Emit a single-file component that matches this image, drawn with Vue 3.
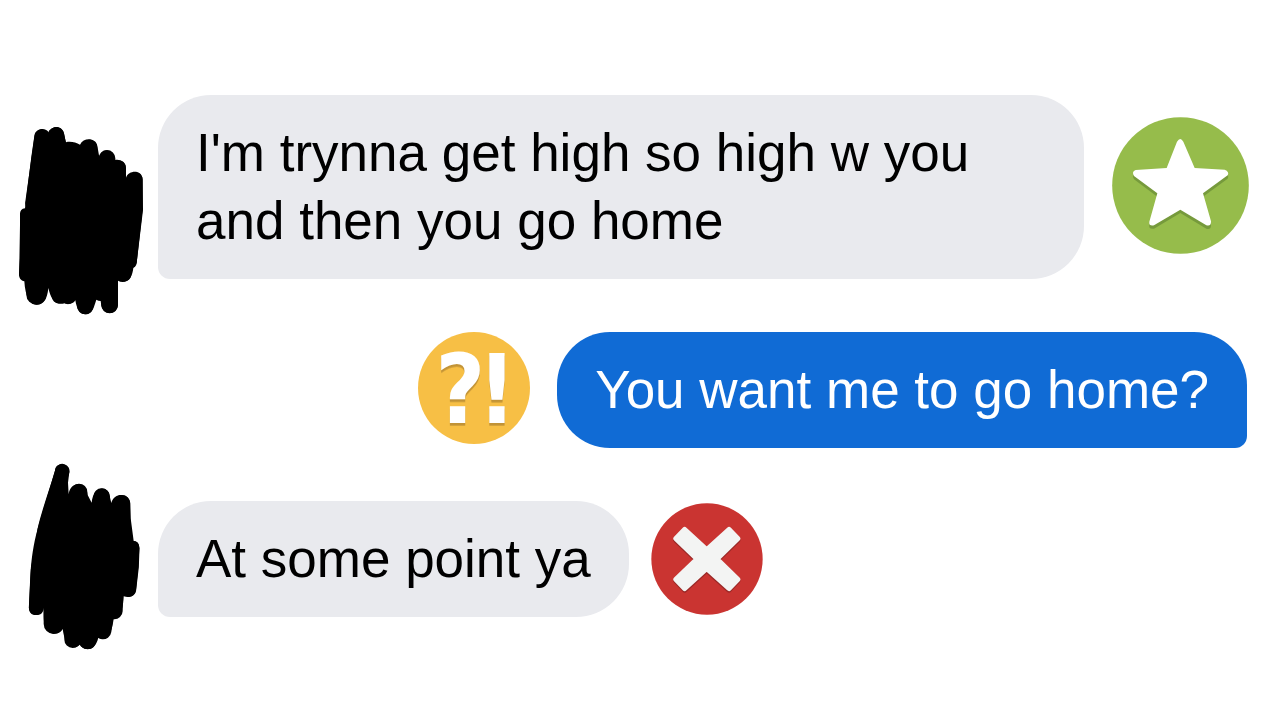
<script setup>
const messages = [
  { id: 1, side: 'incoming', size: 'wide', text: "I'm trynna get high so high w you and then you go home", badge: 'best' },
  { id: 2, side: 'outgoing', size: 'fit', text: 'You want me to go home?', badge: 'inaccuracy' },
  { id: 3, side: 'incoming', size: 'fit', text: 'At some point ya', badge: 'miss' }
]
</script>

<template>
  <main class="chat">
    <div v-for="m in messages" :key="m.id" class="row" :class="[m.side, m.size]">
      <svg v-if="m.id === 1" class="avatar tall" viewBox="0 -45 474 552" aria-hidden="true">
        <path d="M103 78C106 52 140 52 146 68C156 44 188 46 192 72L198 97C212 93 228 98 240 104C250 82 288 82 292 108L298 142C302 114 342 112 345 150C360 147 378 155 378 175L378 203C386 180 426 178 428 208L429 300L411 450C411 462 408 470 400 474C398 495 388 516 368 516Q360 516 354 512L354 585C350 616 312 616 304 588L302 573Q295 573 289 569C280 600 272 613 256 613C238 613 230 595 226 571C220 582 205 585 194 580C165 588 152 565 145 534C142 570 128 585 110 584C88 584 76 560 73 514C62 512 56 502 57 490L61 430L60 312C60 302 65 296 75 295L94 140Z" />
        <path class="pen" d="M125 80L97 280M210 119V300M356 173V300M406 208L406 300L389 453M373 493L380 300M82 317L79 490M177 559V400M204 561V400" />
        <path class="pen broad" d="M168 76L190 200M267 114L260 300M321 145V300M329 585V400M256 588V400" />
        <path class="pen thick" d="M109 554V480" />
      </svg>
      <svg v-if="m.id === 3" class="avatar short" viewBox="0 153 474 348" aria-hidden="true">
        <path d="M165 62C166 36 206 36 208 66L204 98L206 133C210 92 260 92 263 135L275 158C280 104 326 106 329 138L334 159C342 126 388 128 390 160L392 205L401 273Q418 273 418 295L415 350L408 420C404 440 388 444 371 439C370 465 366 500 341 507C336 540 328 568 308 567Q300 567 295 563C288 590 276 598 262 597Q246 596 239 584C226 598 208 593 200 580Q192 565 188 537C180 555 150 558 138 535C130 520 131 500 131 467C132 490 122 495 108 495C92 495 86 485 87 470C92 390 88 330 112 240C125 180 145 130 165 62Z" />
        <path class="pen" d="M187 63L134 240L114 360L108 473M397 294L395 350L387 419" />
        <path class="pen broad" d="M237 126V300M305 140V300M366 160V300M218 569V400M263 573V400M309 543L330 400M343 483L346 400" />
        <path class="pen thick" d="M161 522V470" />
      </svg>

      <p class="bubble">{{ m.text }}</p>

      <svg v-if="m.badge === 'best'" class="badge large" viewBox="36 35 411 411" aria-hidden="true">
        <circle cx="241.500" cy="240.500" r="205" fill="#96bc4b" />
        <path transform="translate(0 10)" fill="#769a3c" d="M231 109Q241 93 250 109L284 188L374 193Q389 199 383 210L309 264L333 348Q334 364 319 360L241 313L162 360Q146 363 148 349L172 264L102 212Q94 199 107 194L200 188Z" />
        <path fill="#fff" d="M231 109Q241 93 250 109L284 188L374 193Q389 199 383 210L309 264L333 348Q334 364 319 360L241 313L162 360Q146 363 148 349L172 264L102 212Q94 199 107 194L200 188Z" />
      </svg>
      <svg v-if="m.badge === 'inaccuracy'" class="badge raised" viewBox="42 36 336 336" aria-hidden="true">
        <circle cx="210" cy="204" r="168" fill="#f7bf45" />
        <text class="mark" x="94 220" y="310">?!</text>
      </svg>
      <svg v-if="m.badge === 'miss'" class="badge" viewBox="35 41 336 336" aria-hidden="true">
        <circle cx="203" cy="209" r="167" fill="#ca3431" />
        <path class="cross cross-shade" transform="translate(0 5)" d="M136 121L202 182L269 121L295 148L232 209L295 270L269 297L202 237L136 297L110 270L174 209L110 148Z" />
        <path class="cross" d="M136 121L202 182L269 121L295 148L232 209L295 270L269 297L202 237L136 297L110 270L174 209L110 148Z" />
      </svg>
    </div>
  </main>
</template>

<style>
body {
  margin: 0;
  background: #fff;
}
</style>

<style scoped>
.chat {
  display: flex;
  flex-direction: column;
  gap: 53px;
  padding: 95px 0 103px;
  font-family: "Liberation Sans", Arial, sans-serif;
}
.row {
  display: flex;
  align-items: center;
}
.outgoing {
  flex-direction: row-reverse;
  gap: 27px;
  padding-right: 33px;
}
.wide {
  padding-right: 31px;
}
.wide .bubble {
  flex: 1;
  margin-right: 28px;
}
.incoming.fit .bubble {
  margin-right: 22px;
}
.avatar {
  flex: none;
  width: 158px;
  overflow: visible;
}
.tall {
  height: 184px;
}
.short {
  height: 116px;
}
.pen {
  fill: none;
  stroke: #000;
  stroke-width: 43px;
  stroke-linecap: round;
  stroke-linejoin: round;
}
.broad {
  stroke-width: 50px;
}
.thick {
  stroke-width: 60px;
}
.bubble {
  box-sizing: border-box;
  margin: 0;
  padding: 24px 38px;
  font-size: 53px;
  line-height: 68px;
  color: #000;
  background: #e9eaee;
  border-radius: 53px 53px 53px 12px;
}
.outgoing .bubble {
  color: #fff;
  background: #106bd5;
  border-radius: 53px 53px 12px 53px;
}
.badge {
  flex: none;
  width: 112px;
  height: 112px;
  overflow: visible;
}
.large {
  width: 137px;
  height: 137px;
}
.large,
.raised {
  margin-bottom: 4px;
}
.mark {
  font-family: "DejaVu Sans Condensed", "DejaVu Sans", sans-serif;
  font-size: 288px;
  font-weight: 700;
  fill: #fff;
  filter: drop-shadow(0 8px 0 #c29336);
}
.cross {
  fill: #f3f4f3;
  stroke: #f3f4f3;
  stroke-width: 16px;
  stroke-linejoin: round;
}
.cross-shade {
  fill: #9b2927;
  stroke: #9b2927;
}
</style>
